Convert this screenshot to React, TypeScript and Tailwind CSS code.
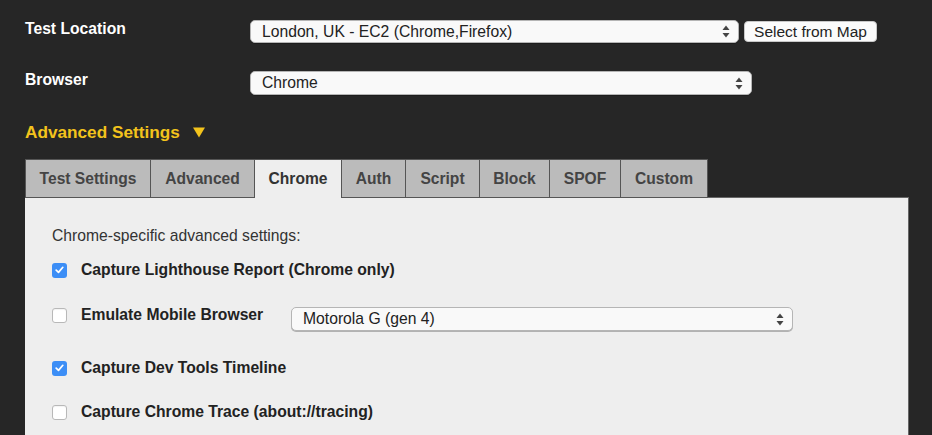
import React from 'react';

const tabs = [
  { label: 'Test Settings', w: 'w-[126px]' },
  { label: 'Advanced', w: 'w-[105px]' },
  { label: 'Chrome', w: 'w-[88px]', active: true },
  { label: 'Auth', w: 'w-[65px]' },
  { label: 'Script', w: 'w-[75px]' },
  { label: 'Block', w: 'w-[71px]' },
  { label: 'SPOF', w: 'w-[72px]' },
  { label: 'Custom', w: 'w-[88px]' },
];

function Arrows() {
  return (
    <svg width="8" height="13" viewBox="0 0 8 13" className="shrink-0">
      <path d="M4 0.5 L7.5 5 L0.5 5 Z" fill="#444" />
      <path d="M4 12.5 L7.5 8 L0.5 8 Z" fill="#444" />
    </svg>
  );
}

function FakeSelect({ value, className }: { value: string; className: string }) {
  return (
    <div
      className={`flex items-center justify-between rounded-[5px] border border-[#b5b5b5] bg-[#f9f9f9] pl-[11px] pr-[8px] text-[15.7px] text-[#222] shadow-[0_1px_0_rgba(0,0,0,0.25)] ${className}`}
    >
      <span>{value}</span>
      <Arrows />
    </div>
  );
}

function Checkbox({ checked }: { checked: boolean }) {
  if (checked) {
    return (
      <div className="flex h-[15px] w-[15px] shrink-0 items-center justify-center rounded-[3px] bg-[#3c8ef6]">
        <svg width="9" height="8" viewBox="0 0 9 8">
          <path d="M1.2 4.2 L3.5 6.4 L7.8 1.3" fill="none" stroke="#fff" strokeWidth="1.7" strokeLinecap="round" strokeLinejoin="round" />
        </svg>
      </div>
    );
  }
  return <div className="h-[15px] w-[15px] shrink-0 rounded-[3px] border border-[#b8b8b8] bg-white shadow-[inset_0_1px_1px_rgba(0,0,0,0.05)]" />;
}

function Option({ checked, label, children }: { checked: boolean; label: string; children?: React.ReactNode }) {
  return (
    <div className="flex items-start">
      <div className="flex h-[18px] items-center">
        <Checkbox checked={checked} />
      </div>
      <span className="ml-[14px] w-[210px] whitespace-nowrap text-[15.7px] font-bold leading-[18px] text-[#222]">{label}</span>
      {children}
    </div>
  );
}

export default function App() {
  return (
    <div
      className="h-[435px] w-[932px] overflow-hidden bg-[#262626] pl-[25px]"
      style={{ fontFamily: '"Liberation Sans", Arial, sans-serif' }}
    >
      <div className="flex items-start pt-[20px]">
        <div className="w-[225px] text-[15.7px] font-bold leading-[17px] text-white">Test Location</div>
        <FakeSelect value="London, UK - EC2 (Chrome,Firefox)" className="h-[23px] w-[489px]" />
        <div className="ml-[5px] mt-[1px] flex h-[21px] w-[133px] items-center justify-center rounded-[4px] border border-[#c8c8c8] bg-[#fbfbfb] text-[15.5px] text-[#222]">
          Select from Map
        </div>
      </div>

      <div className="mt-[28px] flex items-start">
        <div className="w-[225px] text-[15.7px] font-bold leading-[17px] text-white">Browser</div>
        <FakeSelect value="Chrome" className="h-[24px] w-[502px]" />
      </div>

      <div className="mt-[27px] flex items-center text-[17.2px] font-bold leading-[20px] text-[#f3c31c]">
        <span>Advanced Settings</span>
        <svg width="12" height="11" viewBox="0 0 12 11" className="ml-[13px]">
          <path d="M0 0.5 L12 0.5 L6 10.5 Z" fill="#f3c31c" />
        </svg>
      </div>

      <div className="mt-[17px] flex">
        {tabs.map((t, i) => (
          <div
            key={t.label}
            className={`flex h-[39px] items-center justify-center border border-[#555] text-[15.6px] font-bold ${t.w} ${
              i > 0 ? '-ml-px' : ''
            } ${t.active ? 'relative z-10 border-b-0 bg-[#eeeeee] text-[#333]' : 'bg-[#bbbbbb] text-[#444]'}`}
          >
            {t.label}
          </div>
        ))}
      </div>

      <div className="-mt-px h-[260px] w-[884px] border-r border-t border-[#666] bg-[#eeeeee] pl-[27px] pt-[29px]">
        <div className="text-[15.7px] leading-[18px] text-[#333]">Chrome-specific advanced settings:</div>
        <div className="mt-[16px]">
          <Option checked label="Capture Lighthouse Report (Chrome only)" />
        </div>
        <div className="mt-[27px]">
          <Option checked={false} label="Emulate Mobile Browser">
            <FakeSelect value="Motorola G (gen 4)" className="mt-[1px] h-[24px] w-[502px]" />
          </Option>
        </div>
        <div className="mt-[28px]">
          <Option checked label="Capture Dev Tools Timeline" />
        </div>
        <div className="mt-[26px]">
          <Option checked={false} label="Capture Chrome Trace (about://tracing)" />
        </div>
      </div>
    </div>
  );
}
